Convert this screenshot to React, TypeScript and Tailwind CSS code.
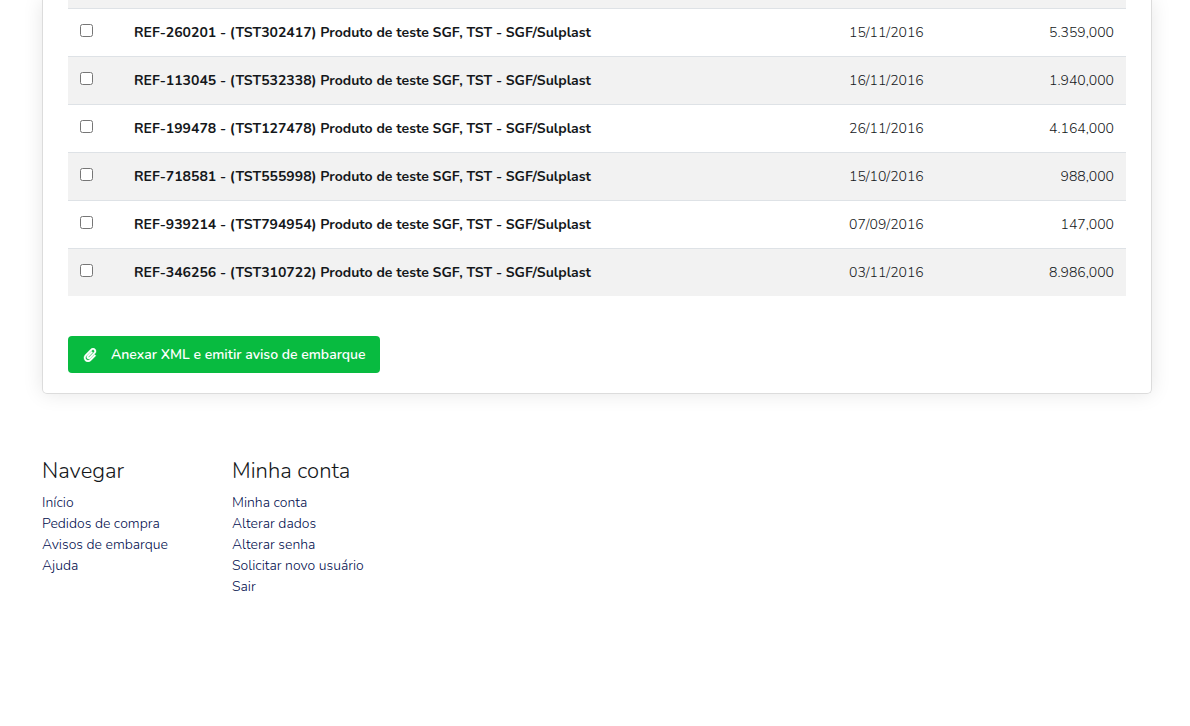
import React from "react";
import { FaPaperclip } from "react-icons/fa";

type Item = { ref: string; code: string; date: string; qty: string };

const items: Item[] = [
  { ref: "REF-260201", code: "TST302417", date: "15/11/2016", qty: "5.359,000" },
  { ref: "REF-113045", code: "TST532338", date: "16/11/2016", qty: "1.940,000" },
  { ref: "REF-199478", code: "TST127478", date: "26/11/2016", qty: "4.164,000" },
  { ref: "REF-718581", code: "TST555998", date: "15/10/2016", qty: "988,000" },
  { ref: "REF-939214", code: "TST794954", date: "07/09/2016", qty: "147,000" },
  { ref: "REF-346256", code: "TST310722", date: "03/11/2016", qty: "8.986,000" },
];

const groups = [
  { title: "Navegar", links: ["Início", "Pedidos de compra", "Avisos de embarque", "Ajuda"] },
  {
    title: "Minha conta",
    links: ["Minha conta", "Alterar dados", "Alterar senha", "Solicitar novo usuário", "Sair"],
  },
];

function ItemRow({ item }: { item: Item }) {
  const id = item.ref.toLowerCase();
  return (
    <tr className="h-12 border-t border-[#dee2e6] align-top leading-[23px] odd:bg-[#f2f2f2]">
      <td className="px-3 pt-[15px]">
        <input id={id} type="checkbox" className="block size-[13px]" />
      </td>
      <td className="px-3 pt-3 font-bold">
        <label htmlFor={id}>
          {item.ref} - ({item.code}) Produto de teste SGF, TST - SGF/Sulplast
        </label>
      </td>
      <td className="px-3 pt-3">{item.date}</td>
      <td className="px-3 pt-3 text-right">{item.qty}</td>
    </tr>
  );
}

export default function App() {
  return (
    <div className="min-h-screen bg-white pr-[38px] pl-[42px] font-[Nunito,'Open_Sans',sans-serif] text-sm font-light text-[#14171a]">
      <main className="rounded-b-[5px] border border-t-0 border-[#dcdcdc] px-[25px] pb-5 shadow-[0_0_20px_rgba(0,0,0,0.1)]">
        <table className="w-full table-fixed border-collapse">
          <colgroup>
            <col className="w-[54px]" />
            <col />
            <col className="w-[150px]" />
            <col className="w-[139px]" />
          </colgroup>
          <tbody>
            <tr className="h-2 bg-[#f2f2f2]">
              <td colSpan={4} />
            </tr>
            {items.map((item) => (
              <ItemRow key={item.ref} item={item} />
            ))}
          </tbody>
        </table>
        <button
          type="button"
          className="mt-10 flex h-[37px] items-center rounded bg-[#08bb40] pr-3.5 pl-[15px] font-semibold text-white"
        >
          <FaPaperclip className="mr-3.5 size-[14px]" stroke="currentColor" strokeWidth={10} aria-hidden="true" />
          Anexar XML e emitir aviso de embarque
        </button>
      </main>
      <footer className="flex pt-16">
        {groups.map((group) => (
          <nav key={group.title} className="w-[190px]" aria-label={group.title}>
            <h2 className="mb-2 text-[22px] leading-[26px]">{group.title}</h2>
            <ul className="leading-[21px] text-[#000d4d]">
              {group.links.map((link) => (
                <li key={link}>
                  <a href="#">{link}</a>
                </li>
              ))}
            </ul>
          </nav>
        ))}
      </footer>
    </div>
  );
}
